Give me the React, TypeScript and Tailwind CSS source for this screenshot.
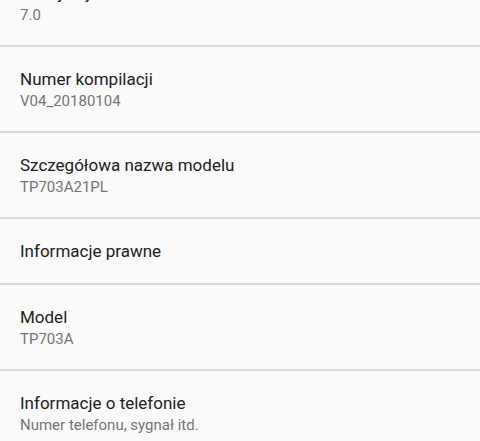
import React from "react";

type Item = { title: string; subtitle?: string };

const items: Item[] = [
  { title: "Wersja systemu Android", subtitle: "7.0" },
  { title: "Numer kompilacji", subtitle: "V04_20180104" },
  { title: "Szczegółowa nazwa modelu", subtitle: "TP703A21PL" },
  { title: "Informacje prawne" },
  { title: "Model", subtitle: "TP703A" },
  { title: "Informacje o telefonie", subtitle: "Numer telefonu, sygnał itd." },
];

export default function App() {
  return (
    <div
      className="w-[480px] h-[441px] overflow-hidden bg-[#fafafa]"
      style={{ fontFamily: "Roboto, 'Noto Sans', sans-serif" }}
    >
      <div className="-mt-[39px] flex flex-col">
        {items.map((it, i) => (
          <div key={i} className="flex flex-col">
            {i > 0 && <div className="h-[2px] bg-[#d9d9d9]" />}
            <div
              className={
                it.subtitle
                  ? "flex flex-col px-5 pt-[21px] pb-[20px]"
                  : "flex flex-col px-5 py-[21px]"
              }
            >
              <div className="text-[17px] leading-[22px] text-[#212121]">{it.title}</div>
              {it.subtitle && (
                <div className="mt-[2px] text-[15px] leading-[19px] text-[#757575]">{it.subtitle}</div>
              )}
            </div>
          </div>
        ))}
      </div>
    </div>
  );
}
